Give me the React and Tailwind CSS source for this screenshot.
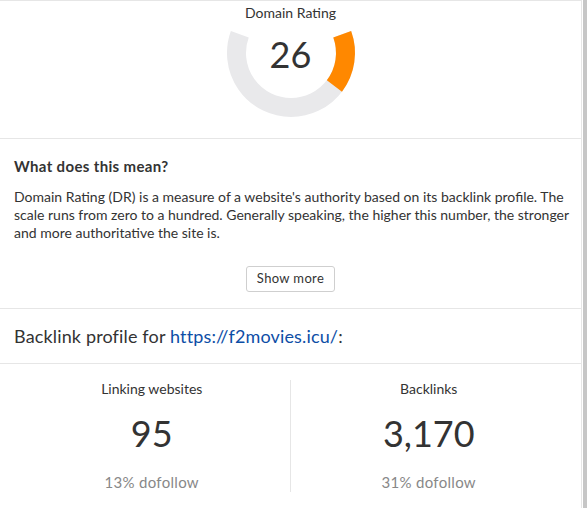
import React from 'react';

// gauge arc geometry, center at origin
const R = 54.5;

function Gauge({ value }) {
    const start = 200; // screen angle in degrees (left top)
    const end = -20; // right top
    const span = start - end;
    const split = end + (span * value) / 100;
    const pt = (deg) => {
        const a = (deg * Math.PI) / 180;
        return `${(R * Math.cos(a)).toFixed(2)} ${(R * Math.sin(a)).toFixed(2)}`;
    };
    return (
        <div className="relative w-[132px] h-[96px]">
            <svg width="132" height="96" viewBox="-66 -30 132 96">
                <path d={`M ${pt(start)} A ${R} ${R} 0 1 0 ${pt(end)}`} fill="none" stroke="#e9e9eb" strokeWidth="19" />
                <path d={`M ${pt(split)} A ${R} ${R} 0 0 0 ${pt(end)}`} fill="none" stroke="#ff8800" strokeWidth="19" />
            </svg>
            <div className="absolute left-0 right-0 top-[9px] text-center text-[36px] leading-[44px] text-[#333]">{value}</div>
        </div>
    );
}

function Stat({ label, value, sub }) {
    return (
        <div className="flex flex-col items-center">
            <span className="text-[14px] leading-[18px] text-[#333]">{label}</span>
            <span className="mt-[13px] text-[36px] leading-[44px] text-[#333]">{value}</span>
            <span className="mt-[17px] text-[15px] leading-[20px] tracking-[0.3px] text-[#888]">{sub}</span>
        </div>
    );
}

export default function App() {
    return (
        <div className="flex h-screen bg-white font-['Lato','Liberation_Sans',sans-serif]">
            <div className="w-[582px] border-t border-r border-[#e6e6e6]">
                <div className="flex flex-col items-center h-[138px] pt-[3px] border-b border-[#e6e6e6]">
                    <span className="text-[14px] leading-[18px] text-[#333]">Domain Rating</span>
                    <div className="mt-[1px]">
                        <Gauge value={26} />
                    </div>
                </div>

                <div className="pl-[14px] pr-[6px] pt-[17px] pb-[16px] border-b border-[#e6e6e6]">
                    <h3 className="text-[15px] leading-[20px] font-bold tracking-[0.35px] text-[#333]">What does this mean?</h3>
                    <p className="mt-[12px] text-[14px] leading-[18px] text-[#333]">
                        Domain Rating (DR) is a measure of a website's authority based on its backlink profile. The scale runs from zero to a hundred. Generally speaking, the higher this number, the stronger and more authoritative the site is.
                    </p>
                    <div className="mt-[24px] flex justify-center pr-[8px]">
                        <button className="h-[26px] px-[10px] border border-[#cfcfcf] rounded-[3px] bg-white text-[13px] tracking-[0.35px] text-[#333]">Show more</button>
                    </div>
                </div>

                <div className="px-[14px] py-[15px] border-b border-[#e6e6e6]">
                    <h2 className="text-[18px] leading-[24px] tracking-[0.15px] text-[#333]">
                        Backlink profile for <a href="#" className="text-[#0d4ea6]">https://f2movies.icu/</a>:
                    </h2>
                </div>

                <div className="px-[14px] pt-[16px]">
                    <div className="grid grid-cols-2 pb-[2px]">
                        <div className="border-r border-[#e6e6e6]">
                            <Stat label="Linking websites" value="95" sub="13% dofollow" />
                        </div>
                        <Stat label="Backlinks" value="3,170" sub="31% dofollow" />
                    </div>
                </div>
            </div>
            <div className="w-px" />
            <div className="w-[4px] bg-[#c6c6c6]" />
        </div>
    );
}
